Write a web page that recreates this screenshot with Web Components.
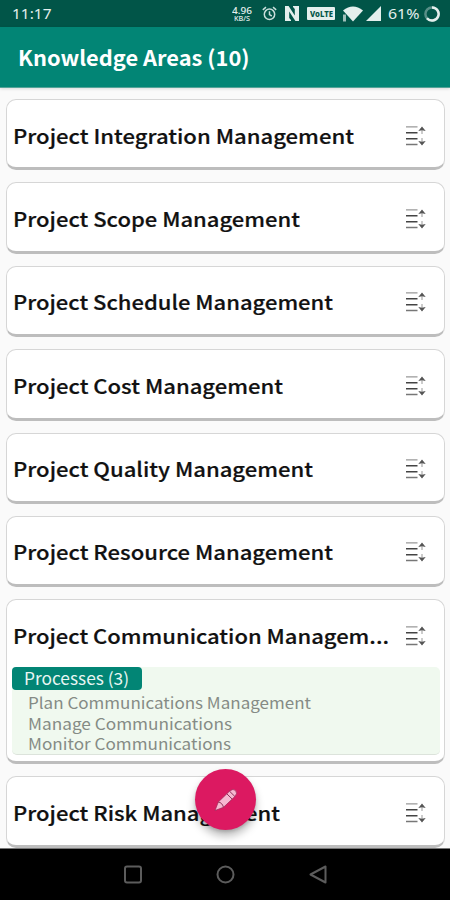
<!DOCTYPE html>
<html lang="en"><head><meta charset="utf-8"><title>Knowledge Areas</title>
<style>
html,body{margin:0;height:900px;overflow:hidden;background:#fafafa}
body{font-family:"Noto Sans CJK SC","Noto Sans",sans-serif}
</style></head><body>
<knowledge-app></knowledge-app>
<script>
const make=(name,html,init)=>customElements.define(name,class extends HTMLElement{
  connectedCallback(){
    if(this.shadowRoot)return;
    this.attachShadow({mode:'open'}).innerHTML=html;
    if(init)init(this,this.shadowRoot);
  }
});

/* Text stretched horizontally to a given width */
make('fit-text','<style>:host{display:block;white-space:nowrap;flex:none}span{display:block;width:max-content;transform-origin:0 50%}</style><span><slot></slot></span>',(el,root)=>{
  const s=root.querySelector('span'),w=s.getBoundingClientRect().width,to=+el.getAttribute('w');
  s.style.transform=`scaleX(${to/w})`;
  el.style.width=to+'px';
});

make('status-bar',`<style>
:host{display:flex;height:27px;background:#015548;color:#e4efed;align-items:center;padding:0 9px 0 12px;box-sizing:border-box;font:15px/27px "Noto Sans",sans-serif}
.sp{flex:1}.net{font-size:9.5px;line-height:9px;width:20px;font-weight:500;display:flex;flex-direction:column;align-items:center}
.net .u{font-size:7px;line-height:7px}
svg{display:block;flex:none}
.lte{width:28px;height:13px;background:#e4efed;color:#015548;font-size:8px;line-height:13px;font-weight:800;border-radius:1px;display:flex;justify-content:center}
</style>
<fit-text w="39.5">11:17</fit-text><div class="sp"></div>
<div class="net"><fit-text w="20">4.96</fit-text><fit-text class="u" w="16">KB/S</fit-text></div>
<svg width="15" height="15" viewBox="0 0 15 15" style="margin-left:9.5px" fill="none" stroke="#c9dedb" stroke-width="1.5"><circle cx="7.5" cy="8.3" r="5.2"/><path d="M.8 3.8 4 1.2M14.2 3.8 11 1.2M7.5 5.2v3.4l2.3 1.4"/></svg>
<svg width="14" height="15" viewBox="0 0 14 15" style="margin-left:8.5px"><path d="M0 0h3.6l6.2 9.5V3L8 1V0h6v15h-3.6L4.2 5.5V12L6 14v1H0z" fill="#e4efed"/></svg>
<div class="lte" style="margin-left:8px"><fit-text w="23">VoLTE</fit-text></div>
<svg width="20" height="16" viewBox="0 0 20 16" style="margin-left:8px"><path d="M0 4.4Q10-3.6 20 4.4L10 15.5z" fill="#e4efed"/><path d="M0 8.5h3v7H0z" fill="#9fbfba"/></svg>
<svg width="15" height="15" viewBox="0 0 15 15" style="margin-left:2.5px"><path d="M15 0v15H0z" fill="#e4efed"/></svg>
<fit-text w="31.5" style="margin-left:7px">61%</fit-text>
<svg width="18" height="18" viewBox="0 0 18 18" style="margin-left:4px" fill="none" stroke-width="2.5"><circle cx="9" cy="9" r="6.6" stroke="#588f87"/><path d="M9 2.4a6.6 6.6 0 1 1-5 10.9" stroke="#e4efed"/></svg>`);

make('title-bar',`<style>
:host{display:flex;height:61px;background:#028575;color:#fff;align-items:center;padding:0 0 1px 17.5px;box-sizing:border-box;font-size:21px;line-height:30px;font-weight:700;border-bottom:1px solid #54a398;position:relative;z-index:1;box-shadow:0 1px 3px #0002}
</style><fit-text w="231.5">Knowledge Areas (10)</fit-text>`);

make('expand-icon',`<style>:host{display:block;width:20px;height:20px;flex:none}svg{display:block}</style>
<svg width="20" height="20" viewBox="0 0 20 20" fill="none" stroke="#444"><path stroke="#999" stroke-width="1.2" d="M0 .8h11.5"/><path stroke-width="1.5" d="M0 6.8h11.5M0 12.8h11.5"/><path stroke="#777" stroke-width="1.4" d="M0 18.5h11.5"/><path stroke="#ccc" stroke-width="2" d="M16 3v5M16 12v5"/><path fill="#555" stroke="none" d="M12.3 5 16 .6 19.7 5 16 4.2zM12.3 15 16 19.4 19.7 15 16 15.8z"/></svg>`);

make('area-card',`<style>
:host{display:block;box-sizing:border-box;height:71.4px;background:#fff;border:1px solid #d6d6d6;border-bottom:3px solid #bdbdbd;border-radius:10px;overflow:hidden;flex:none}
:host([open]){height:165px}
.row{display:flex;height:71px;align-items:center;justify-content:space-between;padding:0 18.5px 0 6px;color:#111;font-size:20px;line-height:30px;font-weight:500;-webkit-text-stroke:.2px #111}
</style><div class="row"><slot name="title"></slot><expand-icon></expand-icon></div><slot></slot>`);

make('process-list',`<style>
:host{display:block;box-sizing:border-box;height:88px;margin:-4px 4px 0 4.5px;background:#f0f9ef;border-bottom:1px solid #dce3db;border-radius:5px;color:#858b85;font-size:15.5px;line-height:20.4px}
.tag{width:130px;height:23px;background:#028575;border-radius:4px;color:#e9f6f3;font-size:17px;line-height:22px;padding-left:12.5px;box-sizing:border-box;margin-bottom:2px}
.items{padding-left:16px}
</style><div class="tag"><slot name="tag"></slot></div><div class="items"><slot></slot></div>`);

make('edit-fab',`<style>
:host{position:absolute;left:195px;top:769px;width:61px;height:61px;border-radius:50%;background:#dc1961;box-shadow:0 6px 9px #0004,0 2px 3px #0002;z-index:2;display:block}
svg{display:block}
</style><svg width="61" height="61" viewBox="0 0 61 61"><path fill="#f6b7d0" stroke="#9c2757" stroke-width=".7" d="M20 41.5 23.3 33 34.5 22.2q3.7-3.2 6.1-.6 2.3 2.7-.8 6L28.5 38.3z"/><path stroke="#8e3159" stroke-width="1" fill="none" d="M23.3 33q3.8.5 5.2 5.3M31.8 24.8l5.3 5.2M34.5 22.2l5.3 5.2"/></svg>`);

make('nav-bar',`<style>
:host{display:flex;height:52px;background:#000;align-items:center;justify-content:center;gap:73px;box-sizing:border-box;border-top:1px solid #777;flex:none;position:relative;z-index:1;padding-left:2px}
svg{display:block}
</style>
<svg width="20" height="20" fill="none" stroke="#5c5c5c" stroke-width="2"><rect x="2" y="1.5" width="16" height="16" rx="2"/></svg>
<svg width="20" height="20" fill="none" stroke="#5c5c5c" stroke-width="2"><circle cx="9.5" cy="9.5" r="8"/></svg>
<svg width="20" height="20" fill="none" stroke="#5c5c5c" stroke-width="2" stroke-linejoin="round"><path d="M1.5 9.5 16.5 1.5v16z"/></svg>`);

const areas=[['Project Integration Management',341],['Project Scope Management',287],['Project Schedule Management',320],['Project Cost Management',270],['Project Quality Management',300],['Project Resource Management',320],['Project Communication Managem...',376,1],['Project Risk Management',267]];
const procs=`<process-list><fit-text slot="tag" w="105">Processes (3)</fit-text><fit-text w="283">Plan Communications Management</fit-text><fit-text w="204">Manage Communications</fit-text><fit-text w="203">Monitor Communications</fit-text></process-list>`;
make('knowledge-app',`<style>
:host{display:flex;flex-direction:column;width:450px;height:900px;background:#fafafa;position:relative;overflow:hidden}
status-bar,title-bar{flex:none}
main{flex:1;min-height:0;overflow:hidden;display:flex;flex-direction:column;gap:12px;padding:11px 5px 0 6px}
</style><status-bar></status-bar><title-bar></title-bar>
<main>${areas.map(([t,w,o])=>`<area-card ${o?'open':''}><fit-text slot="title" w="${w}">${t}</fit-text>${o?procs:''}</area-card>`).join('')}</main>
<nav-bar></nav-bar><edit-fab></edit-fab>`);
</script></body></html>
